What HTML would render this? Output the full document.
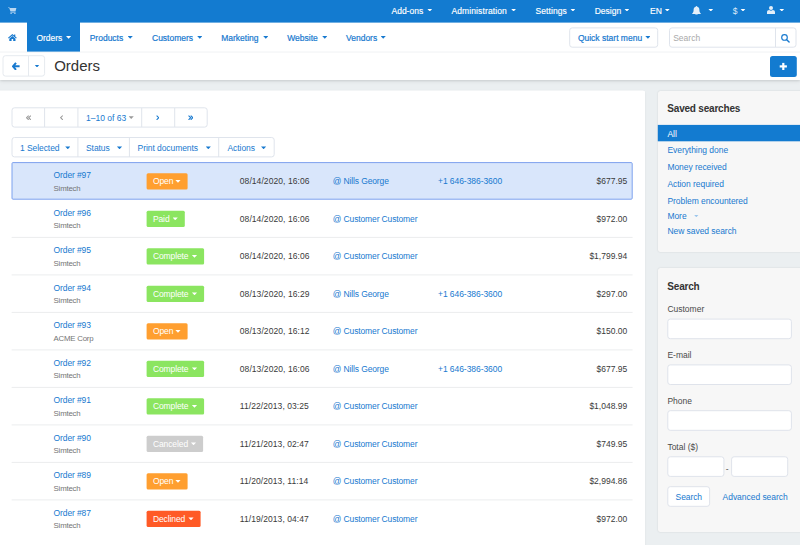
<!DOCTYPE html>
<html><head><meta charset="utf-8"><title>Orders</title>
<style>
*{box-sizing:border-box;margin:0;padding:0}
html,body{width:800px;height:545px;overflow:hidden;background:#ebeff1;font-family:"Liberation Sans",sans-serif;font-size:8.5px;color:#333}
.a{position:absolute}
.t{position:absolute;font-size:8.5px;line-height:10px;white-space:nowrap}
.m{-webkit-text-stroke:0.2px currentColor}
.mw{-webkit-text-stroke:0.15px currentColor}
.bl{color:#1779cf}
.w{color:#fff}
.car{position:absolute;width:5.2px;height:2.8px;background:currentColor;clip-path:polygon(0 0,100% 0,50% 100%)}
#top{position:absolute;left:0;top:0;width:800px;height:23px}
#nav{position:absolute;left:0;top:22px;width:800px;height:30px;background:#fff}
#title{position:absolute;left:0;top:52px;width:800px;height:28px;background:#fff;box-shadow:0 1px 2px rgba(0,0,0,.10),0 2px 4px rgba(0,0,0,.05)}
#main{position:absolute;left:-3px;top:91px;width:648px;height:470px;background:#fff;border-radius:2.5px;box-shadow:0 0 2px rgba(0,0,0,.08)}
.side{position:absolute;left:658px;width:150px;background:#f7f7f7;border-radius:2.5px;box-shadow:0 0 2px rgba(0,0,0,.13)}
#boxes{position:absolute;left:0;top:0}
</style></head><body>
<div id="nav"></div><div id="title"></div><div id="main"></div>
<div class="side" style="top:91px;height:160.8px"></div><div class="side" style="top:268px;height:264.4px"></div>
<svg id="boxes" width="800" height="545" viewBox="0 0 800 545"><rect x="-3.00" y="90.60" width="648.20" height="3.00" rx="2.5" fill="#fff"/>
<rect x="0.00" y="0.00" width="800.00" height="22.60" rx="0" fill="#137bd0"/>
<rect x="0.00" y="51.60" width="800.00" height="0.90" rx="0" fill="#f0f2f4"/>
<rect x="27.00" y="22.00" width="53.00" height="29.60" rx="0" fill="#137bd0"/>
<rect x="569.70" y="27.90" width="88.00" height="19.30" rx="2.5" fill="#fff" stroke="#dfe4ec"/>
<rect x="669.50" y="27.90" width="126.50" height="19.30" rx="2.5" fill="#fff" stroke="#dfe4ec"/>
<rect x="775.00" y="28.00" width="1.00" height="19.00" rx="0" fill="#dfe4ec"/>
<rect x="3.00" y="55.70" width="41.60" height="20.40" rx="2.5" fill="#fff" stroke="#e6eaef"/>
<rect x="28.00" y="56.00" width="1.00" height="20.00" rx="0" fill="#e6eaef"/>
<rect x="770.00" y="56.00" width="26.80" height="21.00" rx="2.5" fill="#137bd0"/>
<rect x="782.20" y="62.90" width="2.20" height="7.10" rx="0" fill="#fff"/>
<rect x="779.70" y="65.30" width="7.20" height="2.20" rx="0" fill="#fff"/>
<rect x="12.00" y="107.80" width="195.20" height="19.30" rx="2.5" fill="#fff" stroke="#dfe4ec"/>
<rect x="44.10" y="108.00" width="1.00" height="19.00" rx="0" fill="#dfe4ec"/>
<rect x="77.40" y="108.00" width="1.00" height="19.00" rx="0" fill="#dfe4ec"/>
<rect x="141.20" y="108.00" width="1.00" height="19.00" rx="0" fill="#dfe4ec"/>
<rect x="174.20" y="108.00" width="1.00" height="19.00" rx="0" fill="#dfe4ec"/>
<rect x="12.00" y="137.50" width="262.20" height="19.40" rx="2.5" fill="#fff" stroke="#dfe4ec"/>
<rect x="77.40" y="138.00" width="1.00" height="19.00" rx="0" fill="#dfe4ec"/>
<rect x="128.90" y="138.00" width="1.00" height="19.00" rx="0" fill="#dfe4ec"/>
<rect x="218.20" y="138.00" width="1.00" height="19.00" rx="0" fill="#dfe4ec"/>
<rect x="12.00" y="162.60" width="620.20" height="36.60" rx="1" fill="#d9e6fb" stroke="#7da1ee"/>
<rect x="146.60" y="173.20" width="41.00" height="16.20" rx="1.5" fill="#ff9f30"/>
<rect x="11.60" y="236.90" width="621.00" height="1.00" rx="0" fill="#ecedee"/>
<rect x="146.60" y="210.70" width="38.20" height="16.20" rx="1.5" fill="#8be560"/>
<rect x="11.60" y="274.40" width="621.00" height="1.00" rx="0" fill="#ecedee"/>
<rect x="146.60" y="248.20" width="57.50" height="16.20" rx="1.5" fill="#8be560"/>
<rect x="11.60" y="311.90" width="621.00" height="1.00" rx="0" fill="#ecedee"/>
<rect x="146.60" y="285.70" width="57.50" height="16.20" rx="1.5" fill="#8be560"/>
<rect x="11.60" y="349.40" width="621.00" height="1.00" rx="0" fill="#ecedee"/>
<rect x="146.60" y="323.20" width="41.00" height="16.20" rx="1.5" fill="#ff9f30"/>
<rect x="11.60" y="386.90" width="621.00" height="1.00" rx="0" fill="#ecedee"/>
<rect x="146.60" y="360.70" width="57.50" height="16.20" rx="1.5" fill="#8be560"/>
<rect x="11.60" y="424.40" width="621.00" height="1.00" rx="0" fill="#ecedee"/>
<rect x="146.60" y="398.20" width="57.50" height="16.20" rx="1.5" fill="#8be560"/>
<rect x="11.60" y="461.90" width="621.00" height="1.00" rx="0" fill="#ecedee"/>
<rect x="146.60" y="435.70" width="56.50" height="16.20" rx="1.5" fill="#cdcdcd"/>
<rect x="11.60" y="499.40" width="621.00" height="1.00" rx="0" fill="#ecedee"/>
<rect x="146.60" y="473.20" width="41.00" height="16.20" rx="1.5" fill="#ff9f30"/>
<rect x="146.60" y="510.70" width="54.00" height="16.20" rx="1.5" fill="#ff5a26"/>
<rect x="657.80" y="124.90" width="143.00" height="16.40" rx="0" fill="#137bd0"/>
<rect x="667.80" y="319.10" width="123.60" height="19.60" rx="2.5" fill="#fff" stroke="#dfe3eb"/>
<rect x="667.80" y="364.90" width="123.60" height="19.60" rx="2.5" fill="#fff" stroke="#dfe3eb"/>
<rect x="667.80" y="410.70" width="123.60" height="19.60" rx="2.5" fill="#fff" stroke="#dfe3eb"/>
<rect x="667.80" y="456.80" width="56.10" height="19.60" rx="2.5" fill="#fff" stroke="#dfe3eb"/>
<rect x="731.60" y="456.80" width="56.10" height="19.60" rx="2.5" fill="#fff" stroke="#dfe3eb"/>
<rect x="667.80" y="486.70" width="41.80" height="19.60" rx="2.5" fill="#fff" stroke="#dfe3eb"/></svg>
<svg class="a" style="left:8px;top:6.8px" width="8.6" height="7.6" viewBox="0 0 86 76"><g fill="#b9d7f1"><path d="M0 2h13l5 9h66l-9 34H25L11 8H0z"/><path d="M24 50h52v6H24z"/><circle cx="31" cy="67" r="8"/><circle cx="69" cy="67" r="8"/></g></svg>
<div class="t mw w" style="left:391.5px;top:5.7px;letter-spacing:0px">Add-ons</div><div class="car w" style="left:427.2px;top:8.7px"></div>
<div class="t mw w" style="left:451.4px;top:5.7px;letter-spacing:0.12px">Administration</div><div class="car w" style="left:511.0px;top:8.7px"></div>
<div class="t mw w" style="left:535.4px;top:5.7px;letter-spacing:0.1px">Settings</div><div class="car w" style="left:570.3px;top:8.7px"></div>
<div class="t mw w" style="left:594.7px;top:5.7px;letter-spacing:0px">Design</div><div class="car w" style="left:624.3px;top:8.7px"></div>
<div class="t mw w" style="left:650.1px;top:5.7px;letter-spacing:0px">EN</div><div class="car w" style="left:664.7px;top:8.7px"></div>
<svg class="a" style="left:692.3px;top:5.5px" width="9" height="9.8" viewBox="0 0 90 98"><g fill="#e4eff9"><path d="M45 0c5 0 8 3 8 8c14 4 21 15 21 32c0 16 4 26 14 34v6H2v-6c10-8 14-18 14-34c0-17 7-28 21-32c0-5 3-8 8-8z"/><path d="M33 84h24c0 8-5 13-12 13s-12-5-12-13z"/></g></svg><div class="car w" style="left:708.2px;top:8.7px"></div>
<div class="t" style="left:732.7px;top:5.7px;color:#dcebf8">$</div><div class="car w" style="left:740.4px;top:8.7px"></div>
<svg class="a" style="left:767px;top:6.3px" width="8" height="8.2" viewBox="0 0 80 82"><g fill="#e4eff9"><circle cx="40" cy="20" r="20"/><path d="M0 82V62c0-14 10-22 22-22c6 5 12 7 18 7s12-2 18-7c12 0 22 8 22 22v20z"/></g></svg><div class="car w" style="left:779.2px;top:8.7px"></div>
<svg class="a" style="left:8.4px;top:33.8px" width="8.8" height="7.2" viewBox="0 0 88 72"><g fill="#1779cf"><path d="M44 0L61 14V5h12v19l15 13l-7 8L44 14L7 45l-7-8z"/><path d="M44 21l31 26v25H52V51H36v21H13V47z"/></g></svg>
<div class="t mw w" style="left:36.4px;top:32.8px">Orders</div><div class="car w" style="left:66px;top:36px"></div>
<div class="t m bl" style="left:89.7px;top:32.8px">Products</div><div class="car bl" style="left:127.6px;top:36px"></div>
<div class="t m bl" style="left:152px;top:32.8px">Customers</div><div class="car bl" style="left:197.2px;top:36px"></div>
<div class="t m bl" style="left:221.2px;top:32.8px">Marketing</div><div class="car bl" style="left:263.2px;top:36px"></div>
<div class="t m bl" style="left:287.2px;top:32.8px">Website</div><div class="car bl" style="left:322.2px;top:36px"></div>
<div class="t m bl" style="left:346px;top:32.8px">Vendors</div><div class="car bl" style="left:380.6px;top:36px"></div>
<div class="t m bl" style="left:577.9px;top:32.8px">Quick start menu</div><div class="car bl" style="left:645.3px;top:36px"></div>
<div class="t" style="left:673.2px;top:32.8px;color:#a9a9a9">Search</div>
<svg class="a" style="left:781.4px;top:33.8px" width="8.8" height="8.8" viewBox="0 0 88 88"><circle cx="35" cy="35" r="28" fill="none" stroke="#1779cf" stroke-width="11.5"/><path d="M57 57L81 81" stroke="#1779cf" stroke-width="14" stroke-linecap="round"/></svg>
<svg class="a" style="left:11.6px;top:61.8px" width="8" height="8.6" viewBox="0 0 80 86"><path d="M40 8L10 43l30 35M14 43h62" fill="none" stroke="#1779cf" stroke-width="20"/></svg>
<div class="car bl" style="left:34.4px;top:64.6px"></div>
<div class="a" style="left:54.2px;top:57px;font-size:15px;line-height:18px;color:#333;white-space:nowrap">Orders</div>
<svg class="a" style="left:25.5px;top:114.9px" width="5.4" height="5.4" viewBox="0 0 60 60"><path d="M30 6L6 30l24 24M54 6L30 30l24 24" fill="none" stroke="#9a9a9a" stroke-width="12"/></svg>
<svg class="a" style="left:59.8px;top:114.9px" width="3.4" height="5.4" viewBox="0 0 36 60"><path d="M30 6L6 30l24 24" fill="none" stroke="#9a9a9a" stroke-width="12"/></svg>
<svg class="a" style="left:155.9px;top:114.9px" width="3.4" height="5.4" viewBox="0 0 36 60"><path d="M6 6L30 30L6 54" fill="none" stroke="#1779cf" stroke-width="12"/></svg>
<svg class="a" style="left:187.7px;top:114.9px" width="5.4" height="5.4" viewBox="0 0 60 60"><path d="M6 6L30 30L6 54M30 6L54 30L30 54" fill="none" stroke="#1779cf" stroke-width="12"/></svg>
<div class="t bl" style="left:86px;top:113px">1–10 of 63</div><div class="car" style="left:128.6px;top:116.3px;color:#999"></div>
<div class="t bl" style="left:20px;top:143px;letter-spacing:-0.07px">1 Selected</div><div class="car bl" style="left:65.2px;top:146.4px"></div>
<div class="t bl" style="left:86px;top:143px;letter-spacing:-0.07px">Status</div><div class="car bl" style="left:116.9px;top:146.4px"></div>
<div class="t bl" style="left:137.6px;top:143px;letter-spacing:-0.07px">Print documents</div><div class="car bl" style="left:205.7px;top:146.4px"></div>
<div class="t bl" style="left:227.5px;top:143px;letter-spacing:-0.07px">Actions</div><div class="car bl" style="left:261px;top:146.4px"></div>
<div class="t bl" style="left:53.6px;top:170.1px;letter-spacing:-0.12px">Order #97</div>
<div class="t" style="left:53.6px;top:183.95px;font-size:7.8px;letter-spacing:-0.2px;color:#747474">Simtech</div>
<div class="t w" style="left:152.9px;top:176.4px;letter-spacing:-0.1px">Open</div><div class="car w" style="left:175.4px;top:179.9px"></div>
<div class="t" style="left:239.8px;top:176.2px;color:#3a3a3a;letter-spacing:0.07px">08/14/2020, 16:06</div>
<div class="t bl" style="left:332.8px;top:176.2px;letter-spacing:-0.13px">@ Nills George</div>
<div class="t bl" style="left:438px;top:176.2px;letter-spacing:-0.06px">+1 646-386-3600</div>
<div class="t" style="right:172.79999999999995px;top:176.2px;color:#3a3a3a">$677.95</div>
<div class="t bl" style="left:53.6px;top:207.6px;letter-spacing:-0.12px">Order #96</div>
<div class="t" style="left:53.6px;top:221.45px;font-size:7.8px;letter-spacing:-0.2px;color:#747474">Simtech</div>
<div class="t w" style="left:152.9px;top:213.9px;letter-spacing:-0.1px">Paid</div><div class="car w" style="left:172.6px;top:217.4px"></div>
<div class="t" style="left:239.8px;top:213.7px;color:#3a3a3a;letter-spacing:0.07px">08/14/2020, 16:06</div>
<div class="t bl" style="left:332.8px;top:213.7px;letter-spacing:-0.13px">@ Customer Customer</div>
<div class="t" style="right:172.79999999999995px;top:213.7px;color:#3a3a3a">$972.00</div>
<div class="t bl" style="left:53.6px;top:245.1px;letter-spacing:-0.12px">Order #95</div>
<div class="t" style="left:53.6px;top:258.95px;font-size:7.8px;letter-spacing:-0.2px;color:#747474">Simtech</div>
<div class="t w" style="left:152.9px;top:251.4px;letter-spacing:-0.1px">Complete</div><div class="car w" style="left:191.9px;top:254.9px"></div>
<div class="t" style="left:239.8px;top:251.2px;color:#3a3a3a;letter-spacing:0.07px">08/14/2020, 16:06</div>
<div class="t bl" style="left:332.8px;top:251.2px;letter-spacing:-0.13px">@ Customer Customer</div>
<div class="t" style="right:172.79999999999995px;top:251.2px;color:#3a3a3a">$1,799.94</div>
<div class="t bl" style="left:53.6px;top:282.6px;letter-spacing:-0.12px">Order #94</div>
<div class="t" style="left:53.6px;top:296.45px;font-size:7.8px;letter-spacing:-0.2px;color:#747474">Simtech</div>
<div class="t w" style="left:152.9px;top:288.9px;letter-spacing:-0.1px">Complete</div><div class="car w" style="left:191.9px;top:292.4px"></div>
<div class="t" style="left:239.8px;top:288.7px;color:#3a3a3a;letter-spacing:0.07px">08/13/2020, 16:29</div>
<div class="t bl" style="left:332.8px;top:288.7px;letter-spacing:-0.13px">@ Nills George</div>
<div class="t bl" style="left:438px;top:288.7px;letter-spacing:-0.06px">+1 646-386-3600</div>
<div class="t" style="right:172.79999999999995px;top:288.7px;color:#3a3a3a">$297.00</div>
<div class="t bl" style="left:53.6px;top:320.1px;letter-spacing:-0.12px">Order #93</div>
<div class="t" style="left:53.6px;top:333.95px;font-size:7.8px;letter-spacing:-0.2px;color:#747474">ACME Corp</div>
<div class="t w" style="left:152.9px;top:326.4px;letter-spacing:-0.1px">Open</div><div class="car w" style="left:175.4px;top:329.9px"></div>
<div class="t" style="left:239.8px;top:326.2px;color:#3a3a3a;letter-spacing:0.07px">08/13/2020, 16:12</div>
<div class="t bl" style="left:332.8px;top:326.2px;letter-spacing:-0.13px">@ Customer Customer</div>
<div class="t" style="right:172.79999999999995px;top:326.2px;color:#3a3a3a">$150.00</div>
<div class="t bl" style="left:53.6px;top:357.6px;letter-spacing:-0.12px">Order #92</div>
<div class="t" style="left:53.6px;top:371.45px;font-size:7.8px;letter-spacing:-0.2px;color:#747474">Simtech</div>
<div class="t w" style="left:152.9px;top:363.9px;letter-spacing:-0.1px">Complete</div><div class="car w" style="left:191.9px;top:367.4px"></div>
<div class="t" style="left:239.8px;top:363.7px;color:#3a3a3a;letter-spacing:0.07px">08/13/2020, 16:06</div>
<div class="t bl" style="left:332.8px;top:363.7px;letter-spacing:-0.13px">@ Nills George</div>
<div class="t bl" style="left:438px;top:363.7px;letter-spacing:-0.06px">+1 646-386-3600</div>
<div class="t" style="right:172.79999999999995px;top:363.7px;color:#3a3a3a">$677.95</div>
<div class="t bl" style="left:53.6px;top:395.1px;letter-spacing:-0.12px">Order #91</div>
<div class="t" style="left:53.6px;top:408.95px;font-size:7.8px;letter-spacing:-0.2px;color:#747474">Simtech</div>
<div class="t w" style="left:152.9px;top:401.4px;letter-spacing:-0.1px">Complete</div><div class="car w" style="left:191.9px;top:404.9px"></div>
<div class="t" style="left:239.8px;top:401.2px;color:#3a3a3a;letter-spacing:0.07px">11/22/2013, 03:25</div>
<div class="t bl" style="left:332.8px;top:401.2px;letter-spacing:-0.13px">@ Customer Customer</div>
<div class="t" style="right:172.79999999999995px;top:401.2px;color:#3a3a3a">$1,048.99</div>
<div class="t bl" style="left:53.6px;top:432.6px;letter-spacing:-0.12px">Order #90</div>
<div class="t" style="left:53.6px;top:446.45px;font-size:7.8px;letter-spacing:-0.2px;color:#747474">Simtech</div>
<div class="t w" style="left:152.9px;top:438.9px;letter-spacing:-0.1px">Canceled</div><div class="car w" style="left:190.9px;top:442.4px"></div>
<div class="t" style="left:239.8px;top:438.7px;color:#3a3a3a;letter-spacing:0.07px">11/21/2013, 02:47</div>
<div class="t bl" style="left:332.8px;top:438.7px;letter-spacing:-0.13px">@ Customer Customer</div>
<div class="t" style="right:172.79999999999995px;top:438.7px;color:#3a3a3a">$749.95</div>
<div class="t bl" style="left:53.6px;top:470.1px;letter-spacing:-0.12px">Order #89</div>
<div class="t" style="left:53.6px;top:483.95px;font-size:7.8px;letter-spacing:-0.2px;color:#747474">Simtech</div>
<div class="t w" style="left:152.9px;top:476.4px;letter-spacing:-0.1px">Open</div><div class="car w" style="left:175.4px;top:479.9px"></div>
<div class="t" style="left:239.8px;top:476.2px;color:#3a3a3a;letter-spacing:0.07px">11/20/2013, 11:14</div>
<div class="t bl" style="left:332.8px;top:476.2px;letter-spacing:-0.13px">@ Customer Customer</div>
<div class="t" style="right:172.79999999999995px;top:476.2px;color:#3a3a3a">$2,994.86</div>
<div class="t bl" style="left:53.6px;top:507.6px;letter-spacing:-0.12px">Order #87</div>
<div class="t" style="left:53.6px;top:521.45px;font-size:7.8px;letter-spacing:-0.2px;color:#747474">Simtech</div>
<div class="t w" style="left:152.9px;top:513.9px;letter-spacing:-0.1px">Declined</div><div class="car w" style="left:188.4px;top:517.4px"></div>
<div class="t" style="left:239.8px;top:513.7px;color:#3a3a3a;letter-spacing:0.07px">11/19/2013, 04:47</div>
<div class="t bl" style="left:332.8px;top:513.7px;letter-spacing:-0.13px">@ Customer Customer</div>
<div class="t" style="right:172.79999999999995px;top:513.7px;color:#3a3a3a">$972.00</div>
<div class="a" style="left:667.3px;top:103.4px;font-size:10px;line-height:12px;font-weight:bold;letter-spacing:-0.2px;color:#333;white-space:nowrap">Saved searches</div>
<div class="t w" style="left:667.4px;top:128.5px">All</div>
<div class="t bl" style="left:667.4px;top:145.4px;letter-spacing:-0.05px">Everything done</div>
<div class="t bl" style="left:667.4px;top:162px;letter-spacing:-0.05px">Money received</div>
<div class="t bl" style="left:667.4px;top:178.9px;letter-spacing:-0.05px">Action required</div>
<div class="t bl" style="left:667.4px;top:195.75px;letter-spacing:-0.05px">Problem encountered</div>
<div class="t bl" style="left:667.4px;top:211.1px;letter-spacing:-0.05px">More</div>
<div class="t bl" style="left:667.4px;top:225.75px;letter-spacing:-0.05px">New saved search</div>
<div class="car" style="left:693.7px;top:214.5px;color:#9cc6ec"></div>
<div class="a" style="left:667.3px;top:281px;font-size:10px;line-height:12px;font-weight:bold;letter-spacing:-0.2px;color:#333;white-space:nowrap">Search</div>
<div class="t" style="left:667.4px;top:304.1px;color:#4a4a4a">Customer</div>
<div class="t" style="left:667.4px;top:350.1px;color:#4a4a4a">E-mail</div>
<div class="t" style="left:667.4px;top:396.2px;color:#4a4a4a">Phone</div>
<div class="t" style="left:667.4px;top:442px;color:#4a4a4a">Total ($)</div>
<div class="t" style="left:725.8px;top:463.5px;color:#555">-</div>
<div class="t bl" style="left:675.6px;top:491.9px;letter-spacing:-0.1px">Search</div><div class="t bl" style="left:722.6px;top:491.9px;letter-spacing:-0.04px">Advanced search</div>
</body></html>
